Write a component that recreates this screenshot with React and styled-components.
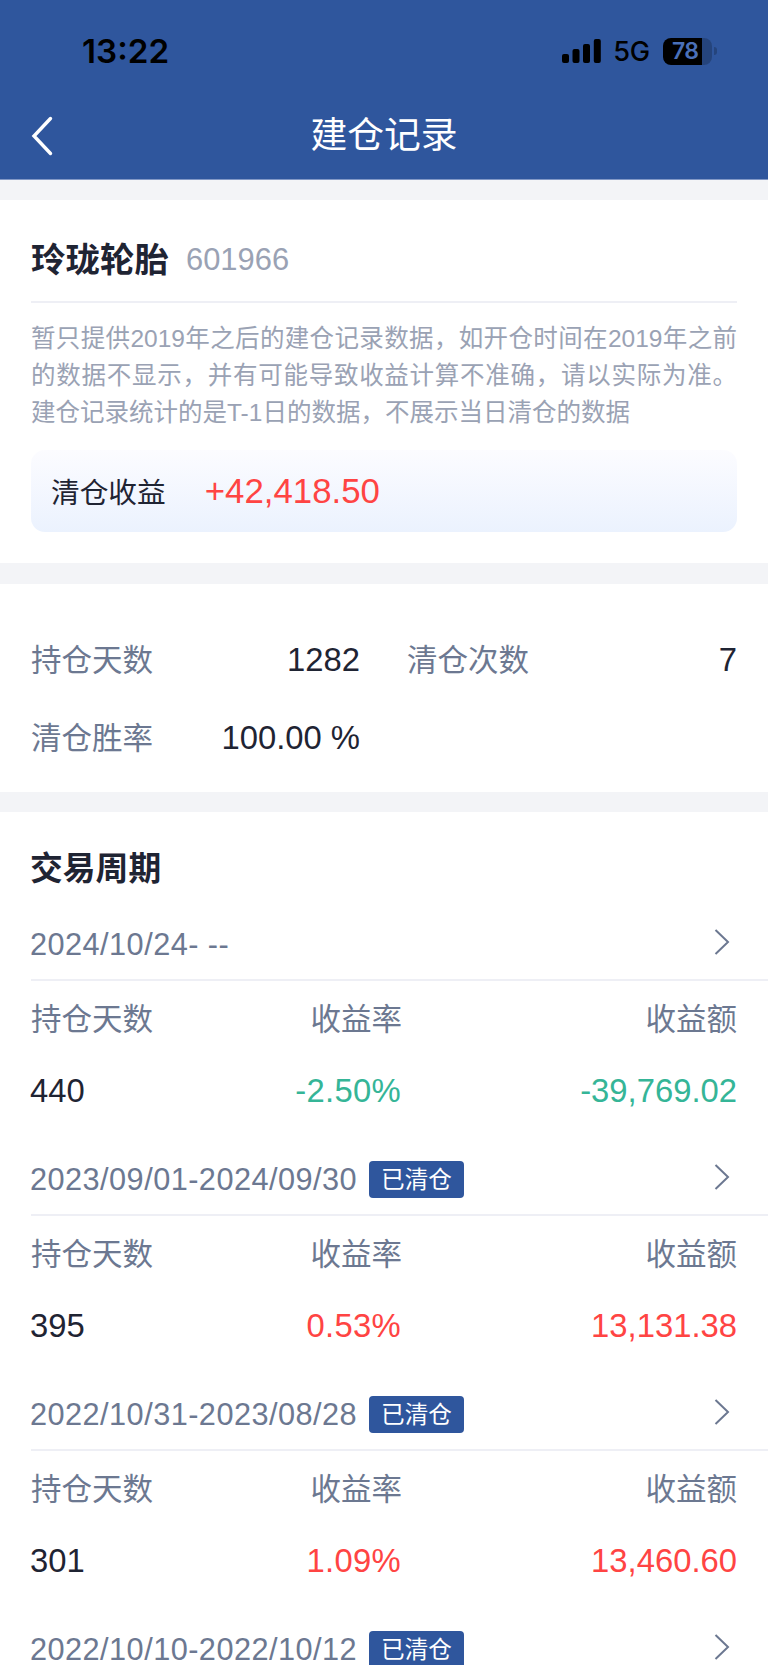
import React from 'react';
import styled, { createGlobalStyle } from 'styled-components';

const color = {
  brand: '#2f569d',
  ink: '#1f2433',
  label: '#6c7891',
  muted: '#9aa2b4',
  up: '#ff4443',
  down: '#35b597',
  line: '#eeeff5',
  band: '#f3f4f7',
};

const GlobalStyle = createGlobalStyle`
  * { box-sizing: border-box; }
  html, body { margin: 0; padding: 0; background: #fff; }
  body {
    font-family: "Liberation Sans", "Noto Sans CJK SC", sans-serif;
    color: ${color.ink};
    overflow: hidden;
  }
`;

const Page = styled.div`
  width: 768px;
  height: 1665px;
  overflow: hidden;
  background: #fff;
`;

const Header = styled.header`
  height: 180px;
  background: ${color.brand};
  border-bottom: 1px solid #8298c6;
`;

const StatusBar = styled.div`
  display: flex;
  justify-content: space-between;
  align-items: center;
  height: 92px;
  padding: 10px 51px 0 82px;
  font-family: Inter, sans-serif;
  color: #000;
`;

const Clock = styled.span`
  font-size: 33.2px;
  font-weight: 600;
  line-height: 40px;
`;

const StatusIcons = styled.div`
  display: flex;
  align-items: center;
`;

const Network = styled.span`
  margin: 2px 13px 0 11px;
  font-size: 27.2px;
  font-weight: 500;
  line-height: 32px;
  letter-spacing: -0.2px;
`;

const Battery = styled.div`
  display: flex;
  align-items: center;
  gap: 2px;
`;

const BatteryBody = styled.div`
  width: 49px;
  height: 27px;
  padding-left: 9px;
  border-radius: 8px;
  background: linear-gradient(to right, #000 39px, #25447c 39px);
  color: #4a70b8;
  font-size: 23px;
  font-weight: 600;
  line-height: 27px;
  letter-spacing: -0.7px;
`;

const BatteryTip = styled.div`
  width: 3px;
  height: 8px;
  border-radius: 0 3px 3px 0;
  background: #25447c;
`;

const NavBar = styled.nav`
  display: grid;
  grid-template-columns: 100px 1fr 100px;
  align-items: center;
  height: 87px;
`;

const BackButton = styled.button`
  display: flex;
  padding: 0 0 0 30px;
  border: 0;
  background: none;
`;

const NavTitle = styled.h1`
  margin: 0;
  padding-top: 1px;
  color: #fff;
  font-size: 36.8px;
  font-weight: 400;
  line-height: 44px;
  text-align: center;
`;

const Band = styled.div`
  height: ${(p) => p.$height}px;
  background: ${color.band};
`;

const StockCard = styled.section`
  height: 363px;
  padding: 16px 31px 0;
`;

const StockTitle = styled.div`
  display: flex;
  align-items: center;
  gap: 17px;
  height: 87px;
  border-bottom: 2px solid ${color.line};
`;

const StockName = styled.h2`
  margin: 0;
  padding-top: 2px;
  font-size: 34.5px;
  font-weight: 700;
  line-height: 44px;
`;

const StockCode = styled.span`
  padding-top: 2px;
  color: ${color.muted};
  font-size: 30.9px;
  line-height: 40px;
`;

const Note = styled.p`
  margin: 18px 0 19px;
  color: ${color.muted};
  font-size: 24.5px;
  line-height: 36.8px;
`;

const NoteLine = styled.span`
  display: block;
  white-space: nowrap;
  text-align: justify;
  text-align-last: ${(p) => (p.$last ? 'left' : 'justify')};
`;

const ProfitBox = styled.div`
  display: flex;
  align-items: center;
  gap: 39px;
  height: 82px;
  padding: 0 20px;
  border-radius: 14px;
  background: linear-gradient(to bottom, #fcfcff, #ebf2fe);
`;

const ProfitLabel = styled.span`
  margin-top: 3px;
  font-size: 28.7px;
  line-height: 40px;
`;

const ProfitValue = styled.span`
  color: ${color.up};
  font-size: 34.8px;
  line-height: 40px;
`;

const Stats = styled.section`
  display: grid;
  grid-template-columns: 329px 330px;
  grid-auto-rows: 78px;
  column-gap: 47px;
  height: 208px;
  padding: 36px 31px 0;
`;

const Stat = styled.div`
  display: flex;
  align-items: center;
  justify-content: space-between;
`;

const Label = styled.span`
  padding-top: 2px;
  color: ${color.label};
  font-size: 30.5px;
  line-height: 40px;
`;

const Value = styled.span`
  padding-top: 2px;
  color: ${(p) => color[p.$tone || 'ink']};
  font-size: 32.8px;
  line-height: 40px;
`;

const PeriodsTitle = styled.h2`
  height: 95px;
  margin: 0;
  padding: 18px 30px 0;
  font-size: 32.8px;
  font-weight: 700;
  line-height: 78px;
`;

const Period = styled.article`
  height: 235px;
  padding-left: 31px;
`;

const PeriodHead = styled.div`
  display: flex;
  align-items: center;
  height: 74px;
  padding-right: 38px;
  border-bottom: 2px solid ${color.line};
`;

const Dates = styled.span`
  margin-left: -1px;
  padding-top: 3px;
  color: ${color.label};
  font-size: 30.7px;
  line-height: 40px;
  letter-spacing: 0.46px;
`;

const ClosedBadge = styled.span`
  height: 37px;
  margin: 3px 0 0 12px;
  padding: 0 12px;
  border-radius: 4px;
  background: ${color.brand};
  color: #fff;
  font-size: 23.6px;
  line-height: 39px;
`;

const MoreIcon = styled.svg`
  margin: -3px 0 0 auto;
`;

const Cells = styled.div`
  display: grid;
  grid-template-columns: 150px 221px 1fr;
  align-items: center;
  height: ${(p) => p.$height}px;
  padding-right: 31px;

  & > :not(:first-child) {
    text-align: right;
  }
`;

const DaysValue = styled(Value)`
  margin-left: -1px;
`;

const RateValue = styled(Value)`
  padding-right: 1px;
  letter-spacing: 0.3px;
`;

const periods = [
  { dates: '2024/10/24- --', days: '440', rate: '-2.50%', amount: '-39,769.02', tone: 'down' },
  { dates: '2023/09/01-2024/09/30', closed: true, days: '395', rate: '0.53%', amount: '13,131.38', tone: 'up' },
  { dates: '2022/10/31-2023/08/28', closed: true, days: '301', rate: '1.09%', amount: '13,460.60', tone: 'up' },
  { dates: '2022/10/10-2022/10/12', closed: true },
];

function Signal() {
  return (
    <svg width="40" height="26" viewBox="0 0 40 26">
      <rect x="0" y="16" width="7" height="9" rx="2" />
      <rect x="10.5" y="11" width="7" height="14" rx="2" />
      <rect x="21" y="6" width="7" height="19" rx="2" />
      <rect x="31.8" y="1" width="7" height="24" rx="2" />
    </svg>
  );
}

function PeriodItem({ period }) {
  return (
    <Period>
      <PeriodHead>
        <Dates>{period.dates}</Dates>
        {period.closed && <ClosedBadge>已清仓</ClosedBadge>}
        <MoreIcon width="16" height="26" viewBox="0 0 16 26" fill="none">
          <path d="M1.5 1L14 13L1.5 25" stroke={color.label} strokeWidth="2" />
        </MoreIcon>
      </PeriodHead>
      {period.days && (
        <>
          <Cells $height={74}>
            <Label>持仓天数</Label>
            <Label>收益率</Label>
            <Label>收益额</Label>
          </Cells>
          <Cells $height={69}>
            <DaysValue>{period.days}</DaysValue>
            <RateValue $tone={period.tone}>{period.rate}</RateValue>
            <Value $tone={period.tone}>{period.amount}</Value>
          </Cells>
        </>
      )}
    </Period>
  );
}

export default function App() {
  return (
    <Page>
      <GlobalStyle />
      <Header>
        <StatusBar>
          <Clock>13:22</Clock>
          <StatusIcons>
            <Signal />
            <Network>5G</Network>
            <Battery>
              <BatteryBody>78</BatteryBody>
              <BatteryTip />
            </Battery>
          </StatusIcons>
        </StatusBar>
        <NavBar>
          <BackButton aria-label="返回">
            <svg width="24" height="40" viewBox="0 0 24 40" fill="none">
              <path d="M20.5 2.5L4 20L20.5 37.5" stroke="#fff" strokeWidth="3.4" strokeLinecap="round" />
            </svg>
          </BackButton>
          <NavTitle>建仓记录</NavTitle>
        </NavBar>
      </Header>
      <Band $height={20} />
      <StockCard>
        <StockTitle>
          <StockName>玲珑轮胎</StockName>
          <StockCode>601966</StockCode>
        </StockTitle>
        <Note>
          <NoteLine>暂只提供2019年之后的建仓记录数据，如开仓时间在2019年之前</NoteLine>
          <NoteLine>的数据不显示，并有可能导致收益计算不准确，请以实际为准。</NoteLine>
          <NoteLine $last>建仓记录统计的是T-1日的数据，不展示当日清仓的数据</NoteLine>
        </Note>
        <ProfitBox>
          <ProfitLabel>清仓收益</ProfitLabel>
          <ProfitValue>+42,418.50</ProfitValue>
        </ProfitBox>
      </StockCard>
      <Band $height={21} />
      <Stats>
        <Stat>
          <Label>持仓天数</Label>
          <Value>1282</Value>
        </Stat>
        <Stat>
          <Label>清仓次数</Label>
          <Value>7</Value>
        </Stat>
        <Stat>
          <Label>清仓胜率</Label>
          <Value>100.00 %</Value>
        </Stat>
      </Stats>
      <Band $height={20} />
      <section>
        <PeriodsTitle>交易周期</PeriodsTitle>
        {periods.map((period) => (
          <PeriodItem key={period.dates} period={period} />
        ))}
      </section>
    </Page>
  );
}
